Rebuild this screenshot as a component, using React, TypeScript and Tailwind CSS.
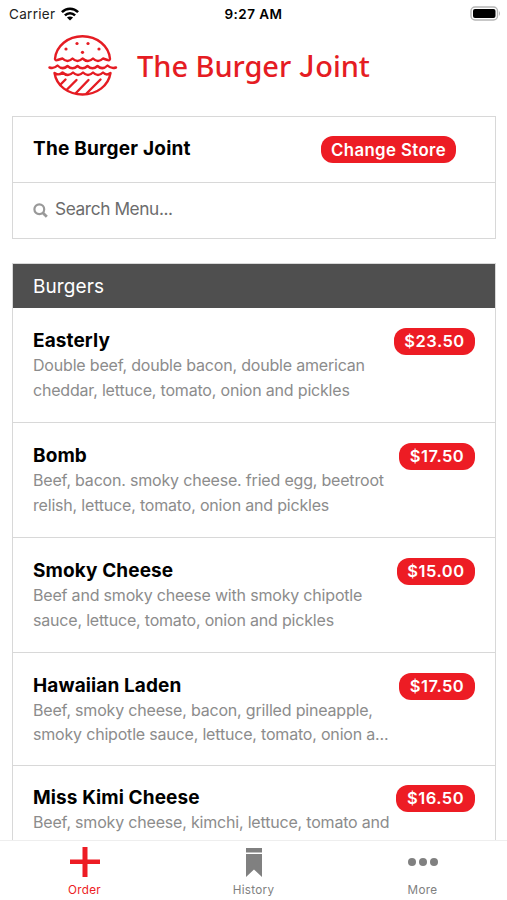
type MenuItem = {
  name: string;
  lines: string[];
  price: string;
  row: string;
  pill: string;
};

const items: MenuItem[] = [
  {
    name: "Easterly",
    lines: ["Double beef, double bacon, double american", "cheddar, lettuce, tomato, onion and pickles"],
    price: "$23.50",
    row: "h-[115px] pt-5",
    pill: "w-[81px]",
  },
  {
    name: "Bomb",
    lines: ["Beef, bacon. smoky cheese. fried egg, beetroot", "relish, lettuce, tomato, onion and pickles"],
    price: "$17.50",
    row: "h-[115px] pt-5",
    pill: "w-[76px]",
  },
  {
    name: "Smoky Cheese",
    lines: ["Beef and smoky cheese with smoky chipotle", "sauce, lettuce, tomato, onion and pickles"],
    price: "$15.00",
    row: "h-[115px] pt-5",
    pill: "w-[78px]",
  },
  {
    name: "Hawaiian Laden",
    lines: ["Beef, smoky cheese, bacon, grilled pineapple,", "smoky chipotle sauce, lettuce, tomato, onion a..."],
    price: "$17.50",
    row: "h-[113px] pt-[19.5px]",
    pill: "w-[76px]",
  },
  {
    name: "Miss Kimi Cheese",
    lines: ["Beef, smoky cheese, kimchi, lettuce, tomato and"],
    price: "$16.50",
    row: "h-[115px] pt-[19px]",
    pill: "w-[79px]",
  },
];

function StatusBar() {
  return (
    <div className="grid h-7 shrink-0 grid-cols-3 items-center text-[13.5px]">
      <div className="flex items-center gap-[6px] pl-[9px] text-[#222]">
        <span className="tracking-[0.3px]">Carrier</span>
        <svg width="18" height="14" viewBox="0 0 18 14" fill="none" stroke="#000" strokeWidth="2.5">
          <path d="M0.9 5.2 C5.4 0.5 12.6 0.5 17.1 5.2" />
          <path d="M3.9 8.4 C6.8 5.5 11.2 5.5 14.1 8.4" />
          <path d="M9 13.6 L5.9 10.6 C7.6 9.1 10.4 9.1 12.1 10.6 Z" fill="#000" stroke="none" />
        </svg>
      </div>
      <div className="text-center font-semibold tracking-[0.45px]">9:27 AM</div>
      <div className="flex justify-end pb-[2px] pr-[6px]">
        <svg width="31" height="15" viewBox="0 0 31 15">
          <rect x="1" y="1" width="26.5" height="13" rx="4" fill="#fff" stroke="#b5b5b5" strokeWidth="1.4" />
          <rect x="3" y="3" width="22.5" height="9" rx="2" fill="#000" />
          <path d="M29 5 Q31 7.5 29 10 Z" fill="#b5b5b5" />
        </svg>
      </div>
    </div>
  );
}

function BurgerLogo() {
  return (
    <svg
      width="70"
      height="62"
      viewBox="0 0 70 62"
      fill="none"
      stroke="#e51c23"
      strokeWidth="2.4"
      strokeLinecap="round"
      strokeLinejoin="round"
    >
      <path d="M7 24 C8 11 20 1.3 34.5 1.3 C49 1.3 61 11 62 24 Q61.5 26 59.5 25 L55 23.5 Q50 28.5 45 23.5 Q40 28.5 34.5 23.5 Q29.5 28.5 24.5 23.5 Q19.5 28.5 14.5 23.5 L9.5 25 Q7.5 26 7 24 Z" />
      <path d="M1.5 32.5 Q6 34 9.5 30.5 Q14.5 35.5 19.5 31 Q24.5 35.5 29.5 31 Q34.5 35.5 39.5 31 Q44.5 35.5 49.5 31 Q54.5 35.5 59.5 30.5 Q63 34 68 32.5" />
      <path d="M6.5 38 Q10.5 41 14.5 37.5 Q20 42.5 25 37.5 Q30 42.5 35 37.5 Q40 42.5 45 37.5 Q50 42.5 55 37.5 Q58.5 41 62.5 38 C60.5 51 48.5 59.5 34.5 59.5 C20.5 59.5 8.5 51 6.5 38 Z" />
      <path d="M12.5 49.5 L17.5 44.5 M19 54.5 L28.5 45 M28 58 L40.5 45 M38.5 58.5 L52.5 44.5" />
      <g fill="#e51c23" stroke="none">
        <circle cx="29" cy="8.5" r="1.6" />
        <circle cx="40" cy="8.5" r="1.6" />
        <circle cx="18" cy="14" r="1.6" />
        <circle cx="51" cy="14" r="1.6" />
        <circle cx="34.5" cy="17.3" r="1.6" />
      </g>
    </svg>
  );
}

function Tab({ label, active, children }: { label: string; active?: boolean; children: React.ReactNode }) {
  return (
    <div className={`flex flex-1 flex-col items-center ${active ? "text-[#ed1c24]" : "text-[#808080]"}`}>
      <div className="flex h-[42px] items-center justify-center">{children}</div>
      <span className="text-[11.7px] leading-[14px] tracking-[0.3px]">{label}</span>
    </div>
  );
}

export default function App() {
  return (
    <div className="flex h-[900px] w-[507px] flex-col overflow-hidden bg-white font-['Inter','Liberation_Sans',sans-serif] text-black">
      <StatusBar />

      <header className="flex h-[88px] shrink-0 items-start pl-12 pt-[7px]">
        <BurgerLogo />
        <h1 className="ml-[19px] mt-[8px] whitespace-nowrap font-['Noto_Sans',sans-serif] text-[29px] font-medium leading-[42px] tracking-[-0.05px] text-[#e51c23]">
          The Burger{" "}
          <span className="font-['Noto_Sans_CJK_JP',sans-serif] tracking-[0.6px]">J</span>oint
        </h1>
      </header>

      <section className="ml-3 mr-[11px] h-[123px] shrink-0 border border-[#d8d8d8]">
        <div className="flex h-[66px] items-center justify-between border-b border-[#d8d8d8] pl-5 pr-[39px]">
          <h2 className="text-[19px] font-[650] tracking-[0.22px]">The Burger Joint</h2>
          <button className="flex h-[27px] w-[135px] items-center justify-center whitespace-nowrap rounded-[12px] bg-[#ed1c24] pt-[2px] text-[16.8px] font-semibold tracking-[0.4px] text-white">
            Change Store
          </button>
        </div>
        <div className="flex h-[55px] items-center pl-5 text-[#6c6c6c]">
          <svg width="15" height="15" viewBox="0 0 15 15" fill="none" stroke="#999" strokeWidth="2.2">
            <circle cx="6.3" cy="6.3" r="4.9" />
            <path d="M10 10 L13.8 13.8" strokeWidth="2.8" />
          </svg>
          <span className="ml-[7px] pb-[3px] text-[17.3px] tracking-[-0.4px]">Search Menu...</span>
        </div>
      </section>

      <section className="ml-3 mr-[11px] mt-6 min-h-0 flex-1 overflow-hidden border border-b-0 border-[#d8d8d8]">
        <div className="flex h-[44px] items-center bg-[#4f4f4f] pl-5 pt-[2px] text-[19px] tracking-[0.1px] text-white">
          Burgers
        </div>
        {items.map((item) => (
          <div
            key={item.name}
            className={`flex items-start justify-between border-b border-[#d8d8d8] pl-5 pr-5 ${item.row}`}
          >
            <div className="whitespace-nowrap">
              <h3 className="pt-[1px] text-[19px] font-[650] leading-[24px] tracking-[0.1px]">{item.name}</h3>
              <div className="w-[350px] text-[16px] leading-[24.5px] tracking-[-0.19px] text-[#8c8c8c]">
                {item.lines.map((line) => (
                  <p key={line}>{line}</p>
                ))}
              </div>
            </div>
            <span
              className={`flex h-[27px] shrink-0 items-center justify-center rounded-[12px] bg-[#ed1c24] text-[16.5px] font-semibold tracking-[0.5px] text-white ${item.pill}`}
            >
              {item.price}
            </span>
          </div>
        ))}
      </section>

      <nav className="flex h-[60px] shrink-0 border-t border-[#eee] bg-white">
        <Tab label="Order" active>
          <svg width="30" height="30" viewBox="0 0 30 30" fill="currentColor">
            <path d="M12.5 0h5v12.5H30v4.5H17.5v13h-5V17H0v-4.5h12.5z" />
          </svg>
        </Tab>
        <Tab label="History">
          <svg width="16" height="29" viewBox="0 0 16 29" fill="currentColor">
            <path d="M0 0h16v4.5H0z M0 6h16v23l-8-7.5L0 29z" />
          </svg>
        </Tab>
        <Tab label="More">
          <svg width="30" height="8" viewBox="0 0 30 8" fill="currentColor">
            <circle cx="4" cy="4" r="4" />
            <circle cx="15" cy="4" r="4" />
            <circle cx="26" cy="4" r="4" />
          </svg>
        </Tab>
      </nav>
    </div>
  );
}
